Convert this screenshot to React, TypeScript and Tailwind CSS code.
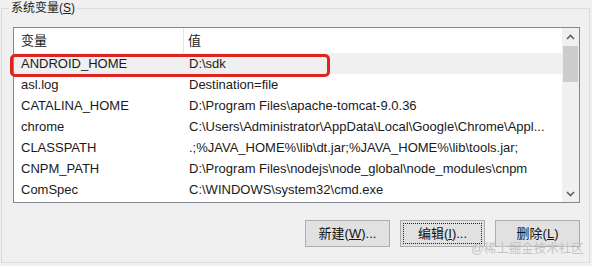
import React from 'react';

const font = { fontFamily: '"Liberation Sans", "Noto Sans CJK SC", sans-serif' };

const rows: [string, string][] = [
  ['ANDROID_HOME', 'D:\\sdk'],
  ['asl.log', 'Destination=file'],
  ['CATALINA_HOME', 'D:\\Program Files\\apache-tomcat-9.0.36'],
  ['chrome', 'C:\\Users\\Administrator\\AppData\\Local\\Google\\Chrome\\Appl...'],
  ['CLASSPATH', '.;%JAVA_HOME%\\lib\\dt.jar;%JAVA_HOME%\\lib\\tools.jar;'],
  ['CNPM_PATH', 'D:\\Program Files\\nodejs\\node_global\\node_modules\\cnpm'],
  ['ComSpec', 'C:\\WINDOWS\\system32\\cmd.exe'],
];

const Chevron = ({ down }: { down?: boolean }) => (
  <svg width="9" height="6" viewBox="0 0 9 6" className={down ? 'rotate-180' : ''}>
    <path d="M1 5 L4.5 1.5 L8 5" fill="none" stroke="#606060" strokeWidth="1.6" />
  </svg>
);

const Btn = ({ label, u, dots, focus }: { label: string; u: string; dots?: boolean; focus?: boolean }) => (
  <div className="w-[85px] h-[27px] bg-[#e1e1e1] border border-[#adadad] flex items-center justify-center text-[13px] text-[#111] relative">
    {focus && <div className="absolute inset-[2px] border border-dotted border-[#222]" />}
    <span className="whitespace-nowrap">
      {label}(<span className="underline">{u}</span>){dots ? '...' : ''}
    </span>
  </div>
);

export default function App() {
  return (
    <div className="w-[592px] h-[266px] bg-[#f0f0f0] relative overflow-hidden" style={font}>
      <div className="ml-[1px] mt-[8px] w-[589px] h-[255px] border border-[#dcdcdc] relative pl-[11px] pt-[18px]">
        <span className="absolute left-[7px] top-[-8px] px-[2px] bg-[#f0f0f0] text-[12px] leading-[15px] text-[#222] whitespace-nowrap">
          系统变量(<span className="underline">S</span>)
        </span>

        <div className="w-[567px] h-[176px] border border-[#828790] bg-white flex">
          <div className="w-[548px] flex flex-col">
            <div className="h-[25px] flex text-[13px] text-[#222] items-stretch">
              <div className="w-[170px] border-r border-[#e5e5e5] pl-[7px] flex items-center">变量</div>
              <div className="pl-[4px] flex items-center">值</div>
            </div>
            {rows.map(([k, v], i) => (
              <div key={k} className={`h-[21px] flex items-center text-[13px] text-[#1a1a1a] whitespace-nowrap ${i === 0 ? 'bg-[#f0f0f0]' : ''}`}>
                <div className="w-[170px] pl-[7px] shrink-0">{k}</div>
                <div className="pl-[5px] overflow-hidden">{v}</div>
              </div>
            ))}
          </div>
          <div className="w-[17px] bg-[#f0f0f0] flex flex-col">
            <div className="h-[18px] flex items-center justify-center">
              <Chevron />
            </div>
            <div className="h-[36px] bg-[#cdcdcd] mx-[1px]" />
            <div className="flex-1" />
            <div className="h-[17px] flex items-center justify-center">
              <Chevron down />
            </div>
          </div>
        </div>

        <div className="mt-[17px] w-[567px] flex justify-end gap-[10px]">
          <Btn label="新建" u="W" dots />
          <Btn label="编辑" u="I" dots focus />
          <Btn label="删除" u="L" />
        </div>
      </div>

      <div className="absolute left-[10px] top-[54px] w-[320px] h-[23px] border-[3px] border-[#e0231c] rounded-[5px]" />
      <div className="absolute left-[471px] top-[241px] text-[12.5px] leading-[16px] text-[#c4c4c4] whitespace-nowrap">@稀土掘金技术社区</div>
    </div>
  );
}
